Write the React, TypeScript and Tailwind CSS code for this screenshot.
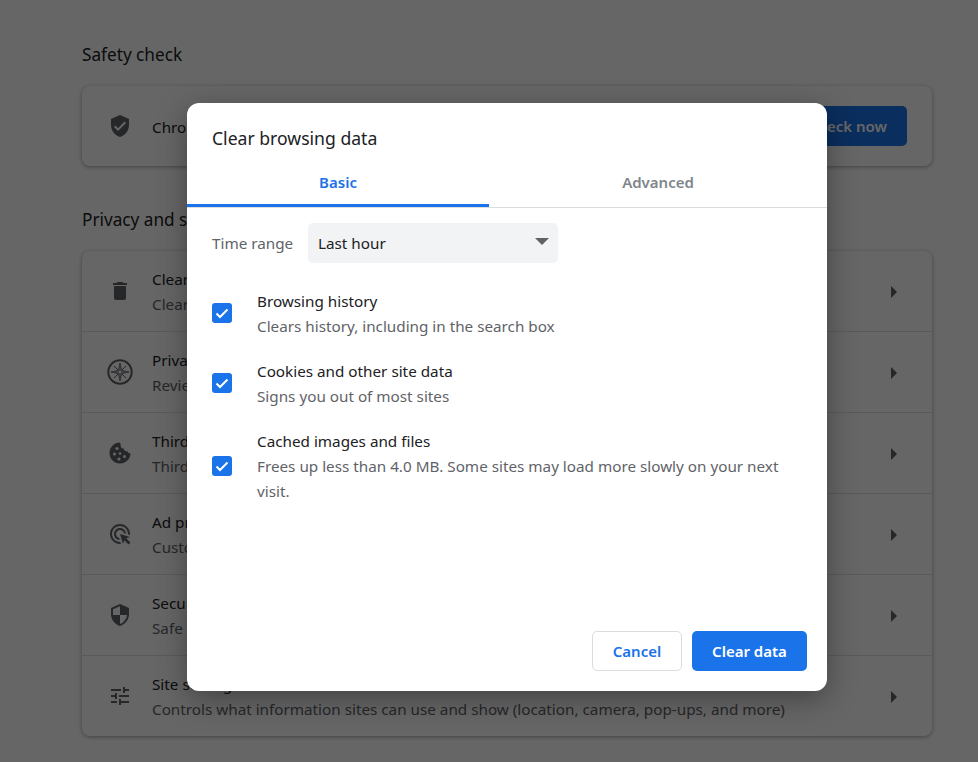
const shieldCheck = "M12 1L3 5v6c0 5.55 3.84 10.74 9 12 5.16-1.26 9-6.45 9-12V5l-9-4zm-2 16l-4-4 1.41-1.41L10 14.17l6.59-6.59L18 9l-8 8z";

function Icon({ d }: { d: string }) {
  return (
    <svg viewBox="0 0 24 24" className="h-6 w-6 flex-none fill-[#5f6368]">
      <path d={d} />
    </svg>
  );
}

function CompassIcon() {
  return (
    <svg viewBox="0 0 26 26" className="h-[26px] w-[26px] flex-none">
      <circle cx="13" cy="13" r="11.7" fill="none" stroke="#5f6368" strokeWidth="2" />
      <path d="M13 4l1.6 7.4 7.4 1.6-7.4 1.6-1.6 7.4-1.6-7.4-7.4-1.6 7.4-1.6z" fill="#5f6368" fillOpacity="0.55" stroke="#5f6368" strokeWidth="0.8" />
      <path d="M7 7l4 4M19 7l-4 4M19 19l-4-4M7 19l4-4" stroke="#5f6368" strokeWidth="1" />
      <circle cx="13" cy="13" r="1.2" fill="#fff" />
    </svg>
  );
}

function CookieIcon() {
  return (
    <svg viewBox="0 0 24 24" className="h-6 w-6 flex-none">
      <path
        fill="#5f6368"
        d="M12 1.5C6 1.5 1.5 6.4 1.5 12.2S6.2 22.5 12 22.5s10.5-4.5 10.5-10.3c-1.6.3-2.8-.4-3.1-1.9-1.9.4-3.6-.7-3.7-2.7-2 .1-3.6-1.7-3-3.9-.2-1-.4-1.7-.7-2.2z"
      />
      <circle cx="9" cy="7.5" r="1.6" fill="#fff" />
      <circle cx="6.5" cy="13" r="1.6" fill="#fff" />
      <circle cx="12" cy="12.5" r="1.3" fill="#fff" />
      <circle cx="11" cy="18" r="1.6" fill="#fff" />
      <circle cx="16.5" cy="15.5" r="1.5" fill="#fff" />
    </svg>
  );
}

const rows = [
  {
    icon: <Icon d="M6 19c0 1.1.9 2 2 2h8c1.1 0 2-.9 2-2V7H6v12zM19 4h-3.5l-1-1h-5l-1 1H5v2h14V4z" />,
    title: "Clear browsing data",
    sub: "Clear history, cookies, cache, and more",
  },
  { icon: <CompassIcon />, title: "Privacy Guide", sub: "Review key privacy and security controls" },
  { icon: <CookieIcon />, title: "Third-party cookies", sub: "Third-party cookies are blocked in Incognito mode" },
  {
    icon: (
      <Icon d="M11.71 17.99C8.53 17.84 6 15.22 6 12c0-3.31 2.69-6 6-6 3.22 0 5.84 2.53 5.99 5.71l-2.1-.63C15.48 9.31 13.89 8 12 8c-2.21 0-4 1.79-4 4 0 1.89 1.31 3.48 3.08 3.89l.63 2.1zM22 12c0 .3-.01.6-.04.9l-1.97-.59c.01-.1.01-.21.01-.31 0-4.42-3.58-8-8-8s-8 3.58-8 8 3.58 8 8 8c.1 0 .21 0 .31-.01l.59 1.97c-.3.03-.6.04-.9.04-5.52 0-10-4.48-10-10S6.48 2 12 2s10 4.48 10 10zm-3.77 4.26L22 15l-10-3 3 10 1.26-3.77 4.27 4.27 1.98-1.98-4.28-4.26z" />
    ),
    title: "Ad privacy",
    sub: "Customize the info used by sites to show you ads",
  },
  {
    icon: <Icon d="M12 1L3 5v6c0 5.55 3.84 10.74 9 12 5.16-1.26 9-6.45 9-12V5l-9-4zm0 10.99h7c-.53 4.12-3.28 7.79-7 8.94V12H5V6.3l7-3.11v8.8z" />,
    title: "Security",
    sub: "Safe Browsing (protection from dangerous sites) and other security settings",
  },
  {
    icon: <Icon d="M3 17v2h6v-2H3zM3 5v2h10V5H3zm10 16v-2h8v-2h-8v-2h-2v6h2zM7 9v2H3v2h4v2h2V9H7zm14 4v-2H11v2h10zm-6-4h2V7h4V5h-4V3h-2v6z" />,
    title: "Site settings",
    sub: "Controls what information sites can use and show (location, camera, pop-ups, and more)",
  },
];

const options = [
  { title: "Browsing history", sub: "Clears history, including in the search box" },
  { title: "Cookies and other site data", sub: "Signs you out of most sites" },
  {
    title: "Cached images and files",
    sub: "Frees up less than 4.0 MB. Some sites may load more slowly on your next visit.",
  },
];

function Checkbox() {
  return (
    <span className="mb-px flex h-5 w-5 flex-none items-center justify-center rounded-[3px] bg-[#1a73e8]">
      <svg viewBox="0 0 20 20" className="h-5 w-5 fill-none stroke-white stroke-[2]">
        <path d="M4.5 10.5l3.5 3.5 7.5-7.5" />
      </svg>
    </span>
  );
}

function ClearDialog() {
  return (
    <div className="flex h-[588px] w-[640px] flex-col rounded-xl bg-white shadow-[0_8px_30px_rgba(0,0,0,0.35)]">
      <div className="px-[25px] pt-[23px] text-[17.6px] leading-6 text-[#202124]">Clear browsing data</div>
      <div className="mt-[12px] flex h-[46px] border-b border-[#dadce0] text-[15px] font-semibold">
        <div className="flex w-[302px] items-center justify-center border-b-[3px] border-[#1a73e8] pb-[2px] text-[#1a73e8]">
          Basic
        </div>
        <div className="flex flex-1 items-center justify-center pb-[5px] text-[#80868b]">Advanced</div>
      </div>
      <div className="flex items-center px-[25px] pt-[15px]">
        <span className="w-[96px] text-[15.25px] text-[#5f6368]">Time range</span>
        <div className="flex h-10 w-[250px] items-center justify-between rounded-[5px] bg-[#f1f3f4] pl-[10px] pr-[9px] text-[15.25px] text-[#202124]">
          Last hour
          <span className="mb-[3px] h-0 w-0 border-x-[7px] border-t-[7px] border-x-transparent border-t-[#5f6368]" />
        </div>
      </div>
      <div className="mt-[25px] flex flex-col gap-[19px] px-[25px]">
        {options.map((o) => (
          <div key={o.title} className="flex items-center gap-[25px]">
            <Checkbox />
            <div className="pt-px text-[15.25px] leading-[25px]">
              <div className="text-[#202124]">{o.title}</div>
              <div className="text-[#5f6368]">{o.sub}</div>
            </div>
          </div>
        ))}
      </div>
      <div className="mt-auto flex justify-end gap-[10px] px-5 pb-5 text-[15px] font-semibold">
        <button className="h-10 w-[90px] rounded-[5px] border border-[#dadce0] bg-white pt-px text-[#1a73e8]">
          Cancel
        </button>
        <button className="h-10 w-[115px] rounded-[5px] bg-[#1a73e8] pt-px text-white">Clear data</button>
      </div>
    </div>
  );
}

export default function App() {
  return (
    <div className="relative h-[762px] w-[978px] overflow-hidden bg-white font-['Noto_Sans',sans-serif]">
      <div className="w-[932px] pl-[82px] pt-[42px]">
        <h2 className="text-[17.2px] leading-[26px] text-[#202124]">Safety check</h2>
        <section className="mt-[18px] flex h-20 items-center rounded-lg bg-white pr-[25px] shadow-[0_1px_4px_rgba(0,0,0,0.35)]">
          <span className="ml-[26px] mr-5 flex w-6 justify-center">
            <Icon d={shieldCheck} />
          </span>
          <span className="flex-1 pt-[2px] text-[15.25px] text-[#202124]">
            Chrome can help keep you safe from data breaches, bad extensions, and more
          </span>
          <button className="h-10 rounded-[5px] bg-[#1a73e8] px-5 text-[15px] font-semibold text-white">
            Check now
          </button>
        </section>
        <h2 className="mt-[41px] text-[17.2px] leading-[26px] text-[#202124]">Privacy and security</h2>
        <section className="mt-[18px] flex flex-col rounded-lg bg-white shadow-[0_1px_4px_rgba(0,0,0,0.35)]">
          {rows.map((r, i) => (
            <div
              key={r.title}
              className={`flex items-center pr-[35px] ${i > 0 ? "h-[81px] border-t border-[#e0e0e0]" : "h-20"}`}
            >
              <span className="ml-[26px] mr-5 flex w-6 flex-none justify-center">{r.icon}</span>
              <div className="flex-1 pt-[2px] text-[15.25px] leading-[25px]">
                <div className="text-[#202124]">{r.title}</div>
                <div className="text-[#5f6368]">{r.sub}</div>
              </div>
              <span className="mt-[2px] h-0 w-0 border-y-[6px] border-l-[6px] border-y-transparent border-l-[#5f6368]" />
            </div>
          ))}
        </section>
      </div>
      {/* scrim + dialog */}
      <div className="absolute inset-0 bg-black/60 pl-[187px] pt-[103px]">
        <ClearDialog />
      </div>
    </div>
  );
}
